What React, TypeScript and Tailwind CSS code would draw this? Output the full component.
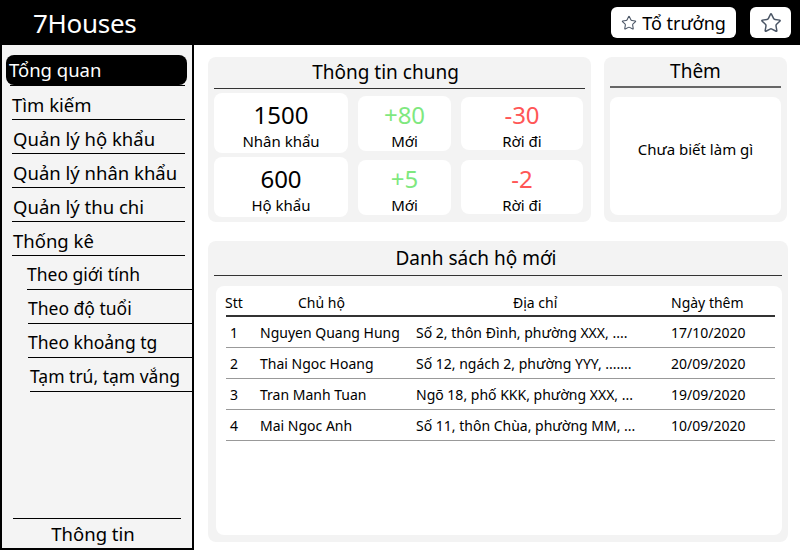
import { Star } from "lucide-react"

const menu = ["Tìm kiếm", "Quản lý hộ khẩu", "Quản lý nhân khẩu", "Quản lý thu chi", "Thống kê"]
const subMenu = [
  { label: "Theo giới tính", ml: "ml-[25px]" },
  { label: "Theo độ tuổi", ml: "ml-[26px]" },
  { label: "Theo khoảng tg", ml: "ml-[26px]" },
  { label: "Tạm trú, tạm vắng", ml: "ml-[28px]" },
]

const rows = [
  ["1", "Nguyen Quang Hung", "Số 2, thôn Đình, phường XXX, ....", "17/10/2020"],
  ["2", "Thai Ngoc Hoang", "Số 12, ngách 2, phường YYY, .......", "20/09/2020"],
  ["3", "Tran Manh Tuan", "Ngõ 18, phố KKK, phường XXX, ...", "19/09/2020"],
  ["4", "Mai Ngoc Anh", "Số 11, thôn Chùa, phường MM, ...", "10/09/2020"],
]

function StatBox({ value, label, color, className }: { value: string; label: string; color: string; className: string }) {
  return (
    <div className={`bg-white rounded-lg flex flex-col items-center justify-center pt-[5px] ${className}`}>
      <div className={`text-[24px] leading-[28px] ${color}`}>{value}</div>
      <div className="text-[15px] leading-[20px] mt-[2px]">{label}</div>
    </div>
  )
}

export default function App() {
  return (
    <div className="w-[800px] h-[550px] flex flex-col bg-white text-black overflow-hidden" style={{ fontFamily: "'Noto Sans', 'Open Sans', sans-serif" }}>
      {/* header */}
      <div className="h-[45px] bg-black flex items-center pl-[33px] pr-[9px]">
        <div className="text-white text-[26px] leading-none tracking-[-0.3px]">7Houses</div>
        <div className="ml-auto flex items-center gap-[14px]">
          <button className="h-[31px] w-[125px] bg-white rounded-md flex items-center justify-center gap-[5px]">
            <Star size={16} strokeWidth={1.6} className="text-gray-600" />
            <span className="text-[18px] leading-none">Tổ trưởng</span>
          </button>
          <button className="h-[31px] w-[41px] bg-white rounded-md flex items-center justify-center">
            <Star size={22} strokeWidth={1.6} className="text-gray-600" />
          </button>
        </div>
      </div>

      <div className="flex flex-1 min-h-0">
        {/* sidebar */}
        <div className="w-[194px] bg-[#f4f4f4] border-2 border-t-0 border-black flex flex-col">
          <div className="pt-[10px] pl-[4px] pr-[5px]">
            <div className="h-[30px] bg-black text-white rounded-lg flex items-center pl-[3px] text-[18.5px]">Tổng quan</div>
          </div>
          <div className="ml-[8px] mr-[7px] border-b border-black"></div>
          {menu.map((m, i) => (
            <div key={m} className={`h-[34px] flex items-center pt-[4px] border-b border-black text-[18.5px] mr-[7px] ml-[10px] ${i === 0 ? "" : "pl-[1px]"}`}>
              {m}
            </div>
          ))}
          {subMenu.map((s) => (
            <div key={s.label} className={`h-[34px] flex items-center pt-[4px] border-b border-black text-[17.5px] ${s.ml}`}>
              {s.label}
            </div>
          ))}
          <div className="mt-auto mx-[11px] border-t border-black h-[30px] flex items-center justify-center pr-[8px] text-[18.5px]">Thông tin</div>
        </div>

        {/* main */}
        <div className="flex-1 pt-[12px] pl-[14px] pr-[12px] pb-[8px] flex flex-col gap-[19px]">
          <div className="grid grid-cols-[383px_183px] gap-[13px] h-[165px]">
            <div className="bg-[#f3f3f3] rounded-lg px-[6px] pb-[5px] flex flex-col">
              <div className="h-[32px] flex items-center justify-center pr-[28px] text-[19px] border-b border-[#333]">Thông tin chung</div>
              <div className="grid grid-cols-[134px_93px_122px] gap-x-[10px] gap-y-[4px] mt-[4px] flex-1">
                <StatBox value="1500" label="Nhân khẩu" color="text-black" className="h-[60px]" />
                <StatBox value="+80" label="Mới" color="text-[#7fe87f]" className="h-[55px] self-center" />
                <StatBox value="-30" label="Rời đi" color="text-[#ff5656]" className="h-[53px] self-center" />
                <StatBox value="600" label="Hộ khẩu" color="text-black" className="h-[60px]" />
                <StatBox value="+5" label="Mới" color="text-[#7fe87f]" className="h-[55px] self-center" />
                <StatBox value="-2" label="Rời đi" color="text-[#ff5656]" className="h-[54px] self-center" />
              </div>
            </div>
            <div className="bg-[#f3f3f3] rounded-lg px-[6px] pb-[7px] flex flex-col">
              <div className="h-[31px] flex items-center justify-center text-[19px] border-b-2 border-[#666]">Thêm</div>
              <div className="mt-[9px] flex-1 bg-white rounded-lg flex items-center justify-center pb-[14px] text-[15px]">Chưa biết làm gì</div>
            </div>
          </div>

          <div className="flex-1 bg-[#f3f3f3] rounded-lg px-[6px] pb-[7px] flex flex-col">
            <div className="h-[35px] flex items-center justify-center pr-[44px] text-[19px] border-b border-[#333]">Danh sách hộ mới</div>
            <div className="mt-[10px] ml-[2px] flex-1 bg-white rounded-lg pl-[10px] pr-[7px] pt-[4px]">
              <div className="grid grid-cols-[34px_156px_255px_1fr] h-[27px] items-center text-[14px] border-b-2 border-[#333]">
                <div className="-ml-px">Stt</div>
                <div className="pl-[38px]">Chủ hộ</div>
                <div className="pl-[97px]">Địa chỉ</div>
                <div>Ngày thêm</div>
              </div>
              {rows.map((r) => (
                <div key={r[0]} className="grid grid-cols-[34px_156px_255px_1fr] h-[31px] items-center text-[14px] border-b border-[#999]">
                  <div className="pl-[4px]">{r[0]}</div>
                  <div>{r[1]}</div>
                  <div>{r[2]}</div>
                  <div>{r[3]}</div>
                </div>
              ))}
            </div>
          </div>
        </div>
      </div>
    </div>
  )
}
